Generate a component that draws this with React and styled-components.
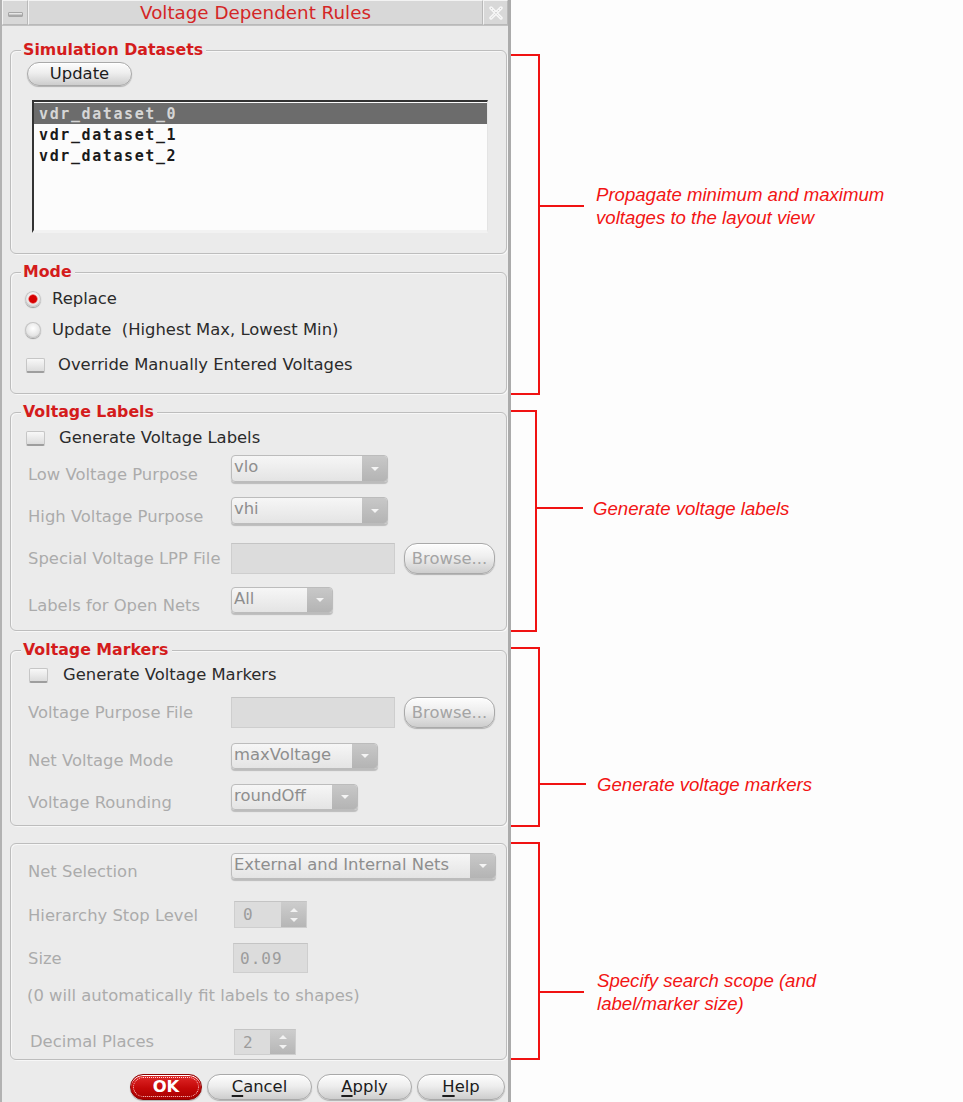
import React from 'react';
import styled, { createGlobalStyle, css } from 'styled-components';

const GlobalStyle = createGlobalStyle`
  html, body {
    margin: 0;
    padding: 0;
    background: #fdfdfd;
  }
  body {
    font-family: 'DejaVu Sans', 'Liberation Sans', sans-serif;
  }
`;

const Page = styled.div`
  display: flex;
  align-items: flex-start;
  width: 963px;
  height: 1102px;
  overflow: hidden;
`;

const Dialog = styled.div`
  box-sizing: border-box;
  flex: none;
  width: 511px;
  height: 1102px;
  display: flex;
  flex-direction: column;
  background: #ebebeb;
  border-left: 2px solid #b2b2b2;
  border-right: 3px solid #ababab;
`;

const TitleBar = styled.div`
  box-sizing: border-box;
  display: flex;
  height: 26px;
  background: #d8d8d8;
  border-bottom: 1px solid #c2c2c2;
`;

const TitleCell = styled.div`
  box-sizing: border-box;
  flex: ${p => (p.$w ? 'none' : 1)};
  width: ${p => (p.$w ? `${p.$w}px` : 'auto')};
  display: flex;
  align-items: center;
  justify-content: center;
  border: 1px solid;
  border-color: #f3f3f3 #b9b9b9 #b9b9b9 #f3f3f3;
`;

const Title = styled.span`
  color: #d42626;
  font-size: 18.3px;
  line-height: 24px;
`;

const MinGlyph = styled.span`
  width: 13px;
  height: 3px;
  margin-top: 3px;
  background: linear-gradient(#f6f6f6, #9a9a9a);
  border: 1px solid #a6a6a6;
  border-radius: 1px;
`;

const Body = styled.div`
  display: flex;
  flex-direction: column;
  padding: 0 1px 0 8px;
`;

const Group = styled.div`
  margin-top: ${p => p.$mt}px;
  padding-bottom: ${p => p.$pb}px;
  border: 1px solid #bdbdbd;
  border-radius: 6px;
  box-shadow: inset 1px 1px 0 #f7f7f7, 1px 1px 0 #f7f7f7;
`;

const Legend = styled.div`
  width: fit-content;
  height: 16px;
  margin: -9px 0 0 10px;
  padding: 0 3px 0 2px;
  background: #ebebeb;
  color: #d41c1c;
  font-size: 15.8px;
  font-weight: bold;
  line-height: 16px;
`;

const Row = styled.div`
  display: flex;
  align-items: center;
  height: ${p => p.$h}px;
  margin-top: ${p => p.$mt}px;
  padding-left: ${p => p.$pl ?? 17}px;
`;

const FieldLabel = styled.span`
  flex: none;
  width: ${p => p.$w ?? 203}px;
  padding-top: ${p => (p.$drop ?? 0) * 2}px;
  color: #ababab;
  font-size: 16.4px;
  line-height: 20px;
  white-space: nowrap;
`;

const OptionText = styled.span`
  margin-left: ${p => p.$gap}px;
  color: #2b2b2b;
  font-size: 16.4px;
  line-height: 20px;
  white-space: pre;
`;

const Note = styled.span`
  color: #ababab;
  font-size: 16.4px;
  line-height: 20px;
`;

const Radio = styled.span`
  flex: none;
  width: 16px;
  height: 16px;
  border-radius: 50%;
  background: radial-gradient(circle at 50% 40%, #ffffff 0, #e6e6e6 55%, #c8c8c8 100%);
  box-shadow: 0 1px 1px rgba(0, 0, 0, 0.35), inset 0 0 0 1px #c4c4c4;
  ${p =>
    p.$on &&
    css`
      background: radial-gradient(circle at 50% 50%, #d60000 0 3.5px, #e88 4.5px, transparent 5px),
        radial-gradient(circle at 50% 40%, #ffffff 0, #e6e6e6 55%, #c8c8c8 100%);
    `}
`;

const Check = styled.span`
  box-sizing: border-box;
  flex: none;
  width: 19px;
  height: 15px;
  border: 1px solid #c6c6c6;
  border-bottom: 2px solid #9e9e9e;
  border-radius: 2px;
  background: linear-gradient(#f8f8f8, #dcdcdc);
`;

const Pill = styled.button`
  box-sizing: border-box;
  flex: none;
  width: ${p => p.$w}px;
  height: 100%;
  padding: 0;
  border: 1px solid #a9a9a9;
  border-radius: 13px;
  background: linear-gradient(#fdfdfd 0%, #eeeeee 45%, #cdcdcd 100%);
  box-shadow: 0 1px 1px rgba(0, 0, 0, 0.25), inset 0 1px 0 #fff;
  font-family: inherit;
  font-size: 16.4px;
  line-height: 20px;
  color: ${p => (p.$dim ? '#a4a4a4' : '#1c1c1c')};
  ${p =>
    p.$primary &&
    css`
      border-color: #8c0000;
      background: linear-gradient(#e12a2a, #c40808 55%, #a80000);
      color: #fff;
      font-weight: bold;
      outline: 1px dotted #ffd6d6;
      outline-offset: -4px;
    `}
  u {
    text-decoration-thickness: 2px;
    text-underline-offset: 3px;
  }
`;

const ListBox = styled.div`
  box-sizing: border-box;
  width: 456px;
  height: 133px;
  padding-top: 1px;
  background: #fcfcfc;
  border-top: 2px solid #333;
  border-left: 2px solid #333;
  border-right: 1px solid #e4e4e4;
  border-bottom: 3px solid #f2f2f2;
  font-family: 'DejaVu Sans Mono', 'Liberation Mono', monospace;
  font-weight: bold;
  font-size: 15px;
  letter-spacing: 1.6px;
`;

const ListItem = styled.div`
  height: 21px;
  padding-left: 5px;
  line-height: 23px;
  color: #1a1a1a;
  ${p =>
    p.$selected &&
    css`
      background: #6c6c6c;
      color: #d6d6d6;
    `}
`;

const Combo = styled.div`
  box-sizing: border-box;
  flex: none;
  display: flex;
  width: ${p => p.$w}px;
  height: 100%;
  overflow: hidden;
  border: 1px solid #bcbcbc;
  border-radius: 4px;
  background: linear-gradient(#f6f6f6, #e4e4e4);
  box-shadow: 0 2px 1px rgba(0, 0, 0, 0.2);
`;

const ComboText = styled.span`
  flex: 1;
  padding-left: 2px;
  color: #8e8e8e;
  font-size: 16.4px;
  line-height: 22px;
  white-space: nowrap;
`;

const ComboArrow = styled.span`
  flex: none;
  width: 25px;
  display: flex;
  align-items: center;
  justify-content: center;
  background: linear-gradient(#c8c8c8, #b4b4b4);

  &::after {
    content: '';
    border-left: 4px solid transparent;
    border-right: 4px solid transparent;
    border-top: 4px solid #f4f4f4;
  }
`;

const Field = styled.div`
  box-sizing: border-box;
  flex: none;
  display: flex;
  width: ${p => p.$w}px;
  height: 100%;
  background: #dcdcdc;
  border: 1px solid #cecece;
  border-top-color: #c4c4c4;
`;

const FieldValue = styled.span`
  flex: 1;
  align-self: center;
  padding-left: ${p => p.$pl ?? 6}px;
  color: #9c9c9c;
  font-family: 'DejaVu Sans Mono', 'Liberation Mono', monospace;
  font-size: 16px;
  letter-spacing: ${p => p.$ls ?? 0}px;
`;

const SpinButtons = styled.span`
  flex: none;
  width: 25px;
  display: flex;
  flex-direction: column;
  align-items: center;
  justify-content: center;
  gap: 6px;
  background: linear-gradient(#cdcdcd, #b6b6b6);
`;

const SpinArrow = styled.span`
  border-left: 4px solid transparent;
  border-right: 4px solid transparent;
  ${p => (p.$up ? 'border-bottom: 4px solid #f2f2f2;' : 'border-top: 4px solid #f2f2f2;')}
`;

const Gap = styled.span`
  flex: none;
  width: ${p => p.$w}px;
`;

const ButtonBar = styled.div`
  display: flex;
  justify-content: flex-end;
  gap: 5px;
  height: 26px;
  margin-top: 14px;
  padding-right: 2px;
`;

const Notes = styled.div`
  display: flex;
  flex-direction: column;
  padding-top: 54px;
`;

const NoteRow = styled.div`
  display: flex;
  align-items: flex-start;
  margin-top: ${p => p.$mt}px;
`;

const Bracket = styled.div`
  box-sizing: border-box;
  flex: none;
  width: ${p => p.$w}px;
  height: ${p => p.$h}px;
  border: 2px solid #f01212;
  border-left: none;
`;

const Callout = styled.div`
  display: flex;
  align-items: center;
  height: 0;
  margin-top: ${p => p.$y}px;
`;

const Tick = styled.span`
  flex: none;
  width: ${p => p.$w}px;
  height: 2px;
  background: #f01212;
`;

const NoteText = styled.p`
  margin: 0 0 0 ${p => p.$gap}px;
  font-family: 'Liberation Sans', Arial, sans-serif;
  font-style: italic;
  font-size: 18.6px;
  line-height: 23px;
  color: #f21414;
  white-space: nowrap;
`;

const notes = [
  { mt: 0, h: 341, w: 29, y: 152, tick: 44, gap: 12, lines: ['Propagate minimum and maximum', 'voltages to the layout view'] },
  { mt: 15, h: 222, w: 26, y: 98, tick: 46, gap: 10, lines: ['Generate voltage labels'] },
  { mt: 15, h: 180, w: 29, y: 137, tick: 46, gap: 11, lines: ['Generate voltage markers'] },
  { mt: 15, h: 218, w: 29, y: 150, tick: 44, gap: 13, lines: ['Specify search scope (and', 'label/marker size)'] },
];

const datasets = ['vdr_dataset_0', 'vdr_dataset_1', 'vdr_dataset_2'];

const CloseGlyph = () => (
  <svg width="14" height="14" viewBox="0 0 14 14">
    <path d="M2 2 L12 12 M12 2 L2 12" stroke="#f6f6f6" strokeWidth="3.5" strokeLinecap="round" />
    <path d="M2 2 L12 12 M12 2 L2 12" stroke="#cfcfcf" strokeWidth="1" strokeDasharray="1.5 1.5" />
  </svg>
);

const ComboBox = ({ w, value }) => (
  <Combo $w={w}>
    <ComboText>{value}</ComboText>
    <ComboArrow />
  </Combo>
);

const SpinBox = ({ w, value }) => (
  <Field $w={w}>
    <FieldValue $pl={8}>{value}</FieldValue>
    <SpinButtons>
      <SpinArrow $up />
      <SpinArrow />
    </SpinButtons>
  </Field>
);

const App = () => (
  <Page>
    <GlobalStyle />
    <Dialog>
      <TitleBar>
        <TitleCell $w={26}>
          <MinGlyph />
        </TitleCell>
        <TitleCell>
          <Title>Voltage Dependent Rules</Title>
        </TitleCell>
        <TitleCell $w={25}>
          <CloseGlyph />
        </TitleCell>
      </TitleBar>

      <Body>
        <Group $mt={24} $pb={20}>
          <Legend>Simulation Datasets</Legend>
          <Row $h={24} $mt={4} $pl={16}>
            <Pill $w={105}>Update</Pill>
          </Row>
          <Row $h={133} $mt={14} $pl={21}>
            <ListBox>
              {datasets.map((name, i) => (
                <ListItem key={name} $selected={i === 0}>
                  {name}
                </ListItem>
              ))}
            </ListBox>
          </Row>
        </Group>

        <Group $mt={18} $pb={18}>
          <Legend>Mode</Legend>
          <Row $h={20} $mt={9} $pl={14}>
            <Radio $on />
            <OptionText $gap={11}>Replace</OptionText>
          </Row>
          <Row $h={20} $mt={11} $pl={14}>
            <Radio />
            <OptionText $gap={11}>{'Update  (Highest Max, Lowest Min)'}</OptionText>
          </Row>
          <Row $h={20} $mt={15} $pl={15}>
            <Check />
            <OptionText $gap={13}>Override Manually Entered Voltages</OptionText>
          </Row>
        </Group>

        <Group $mt={18} $pb={17}>
          <Legend>Voltage Labels</Legend>
          <Row $h={20} $mt={8} $pl={15}>
            <Check />
            <OptionText $gap={14}>Generate Voltage Labels</OptionText>
          </Row>
          <Row $h={27} $mt={7}>
            <FieldLabel $drop={6}>Low Voltage Purpose</FieldLabel>
            <ComboBox w={157} value="vlo" />
          </Row>
          <Row $h={27} $mt={15}>
            <FieldLabel $drop={6}>High Voltage Purpose</FieldLabel>
            <ComboBox w={157} value="vhi" />
          </Row>
          <Row $h={31} $mt={19}>
            <FieldLabel>Special Voltage LPP File</FieldLabel>
            <Field $w={164} />
            <Gap $w={9} />
            <Pill $w={91} $dim>Browse...</Pill>
          </Row>
          <Row $h={26} $mt={13}>
            <FieldLabel $drop={6}>Labels for Open Nets</FieldLabel>
            <ComboBox w={102} value="All" />
          </Row>
        </Group>

        <Group $mt={19} $pb={15}>
          <Legend>Voltage Markers</Legend>
          <Row $h={20} $mt={7} $pl={18}>
            <Check />
            <OptionText $gap={15}>Generate Voltage Markers</OptionText>
          </Row>
          <Row $h={31} $mt={12}>
            <FieldLabel>Voltage Purpose File</FieldLabel>
            <Field $w={164} />
            <Gap $w={9} />
            <Pill $w={91} $dim>Browse...</Pill>
          </Row>
          <Row $h={26} $mt={15}>
            <FieldLabel $drop={5}>Net Voltage Mode</FieldLabel>
            <ComboBox w={147} value="maxVoltage" />
          </Row>
          <Row $h={26} $mt={15}>
            <FieldLabel $drop={6}>Voltage Rounding</FieldLabel>
            <ComboBox w={127} value="roundOff" />
          </Row>
        </Group>

        <Group $mt={17} $pb={4}>
          <Row $h={26} $mt={9}>
            <FieldLabel $drop={6}>Net Selection</FieldLabel>
            <ComboBox w={265} value="External and Internal Nets" />
          </Row>
          <Row $h={27} $mt={22}>
            <FieldLabel $w={206} $drop={1}>Hierarchy Stop Level</FieldLabel>
            <SpinBox w={73} value="0" />
          </Row>
          <Row $h={30} $mt={15}>
            <FieldLabel $w={205} $drop={1}>Size</FieldLabel>
            <Field $w={75}>
              <FieldValue $ls={1}>0.09</FieldValue>
            </Field>
          </Row>
          <Row $h={20} $mt={13} $pl={16}>
            <Note>(0 will automatically fit labels to shapes)</Note>
          </Row>
          <Row $h={26} $mt={23} $pl={19}>
            <FieldLabel $w={204}>Decimal Places</FieldLabel>
            <SpinBox w={62} value="2" />
          </Row>
        </Group>

        <ButtonBar>
          <Pill $w={72} $primary>OK</Pill>
          <Pill $w={105}>
            <u>C</u>ancel
          </Pill>
          <Pill $w={95}>
            <u>A</u>pply
          </Pill>
          <Pill $w={88}>
            <u>H</u>elp
          </Pill>
        </ButtonBar>
      </Body>
    </Dialog>

    <Notes>
      {notes.map(n => (
        <NoteRow key={n.lines[0]} $mt={n.mt}>
          <Bracket $w={n.w} $h={n.h} />
          <Callout $y={n.y}>
            <Tick $w={n.tick} />
            <NoteText $gap={n.gap}>
              {n.lines.map((line, i) => (
                <React.Fragment key={line}>
                  {i > 0 && <br />}
                  {line}
                </React.Fragment>
              ))}
            </NoteText>
          </Callout>
        </NoteRow>
      ))}
    </Notes>
  </Page>
);

export default App;
